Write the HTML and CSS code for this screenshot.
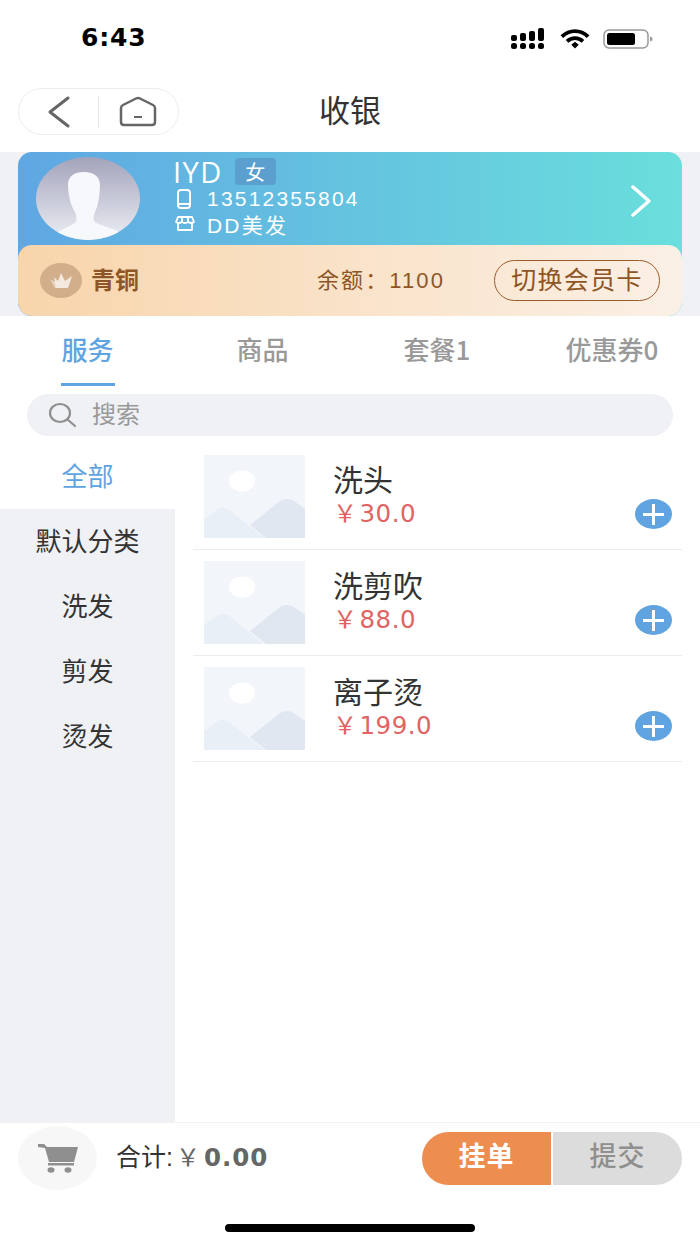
FILE: index.html
```html
<!DOCTYPE html>
<html lang="en">
<head>
    <meta charset="UTF-8">
    <meta name="viewport" content="width=device-width, initial-scale=1.0">
    <title>收银</title>
    <link rel="stylesheet" href="styles.css">
</head>
<body>
    <div class="page">
        <div class="status-bar">
            <span class="time">6:43</span>
            <div class="status-icons">
                <svg width="36" height="21" viewBox="0 0 36 21" fill="#000">
                    <rect x="0" y="7" width="6" height="6" rx="2"/><rect x="9" y="5" width="6" height="8" rx="2"/><rect x="18" y="3" width="6" height="10" rx="2"/><rect x="27" y="0" width="6" height="13" rx="2"/>
                    <rect x="0" y="15" width="6" height="6" rx="2.5"/><rect x="9" y="15" width="6" height="6" rx="2.5"/><rect x="18" y="15" width="6" height="6" rx="2.5"/><rect x="27" y="15" width="6" height="6" rx="2.5"/>
                </svg>
                <svg width="30" height="20" viewBox="0 0 32 20" fill="none" stroke="#000" stroke-width="4">
                    <path d="M2 7.500C10-.5 22-.5 30 7.500"/><path d="M7.500 12.500C12.500 8 19.500 8 24.500 12.500"/><path d="M12 16L16 12.800L20 16L16 20Z" fill="#000" stroke="none"/>
                </svg>
                <svg width="50" height="20" viewBox="0 0 50 20" fill="none">
                    <rect x="1" y="1" width="44" height="18" rx="5" stroke="#999" stroke-width="1.500"/>
                    <rect x="4" y="4" width="28" height="12" rx="2.500" fill="#000"/>
                    <path d="M47 7.500C49 8 49.500 9 49.500 10C49.500 11 49 12 47 12.500Z" fill="#999"/>
                </svg>
            </div>
        </div>

        <div class="nav-bar">
            <div class="capsule">
                <button class="capsule-btn">
                    <svg width="26" height="34" viewBox="0 0 26 34" fill="none" stroke="#666" stroke-width="3" stroke-linecap="round" stroke-linejoin="round"><path d="M22 3L4 17L22 31"/></svg>
                </button>
                <span class="capsule-line"></span>
                <button class="capsule-btn">
                    <svg width="38" height="31" viewBox="0 0 38 31" fill="none" stroke="#666" stroke-width="2.500" stroke-linejoin="round"><path d="M2 12Q2 10 4 9L17 2.500Q19 1.500 21 2.500L34 9Q36 10 36 12V26Q36 29 33 29H5Q2 29 2 26Z"/><path d="M15 21H23" stroke-width="2"/></svg>
                </button>
            </div>
            <h1 class="nav-title">收银</h1>
        </div>

        <section class="member-wrap">
            <div class="member-card">
                <div class="member-top">
                    <div class="avatar">
                        <svg width="104" height="83" viewBox="0 0 104 83">
                            <defs>
                                <linearGradient id="avatarBg" x1="0" y1="0" x2="0" y2="1"><stop offset="0" stop-color="#a3a3bb"/><stop offset="1" stop-color="#eceef4"/></linearGradient>
                            </defs>
                            <rect width="104" height="83" fill="url(#avatarBg)"/>
                            <path d="M16 83C18 76 26 73 39 66C41 64 41 60 39 55C35 49 32 38 32 28C32 19 38 15 48 15C58 15 64 20 64 28C64 38 62 49 59 55C57 60 57 64 60 66C72 71 84 72 91 83Z" fill="#f6f8fc"/>
                        </svg>
                    </div>
                    <div class="member-info">
                        <div class="member-name"><span>IYD</span><span class="gender">女</span></div>
                        <div class="member-line">
                            <svg class="icon-phone" width="14" height="20" viewBox="0 0 14 20" fill="none" stroke="#fff" stroke-width="2"><rect x="1" y="1" width="12" height="18" rx="3"/><path d="M1 15H13"/></svg>
                            <span>13512355804</span>
                        </div>
                        <div class="member-line shop-line">
                            <svg class="icon-shop" width="20" height="15" viewBox="0 0 20 15" fill="none" stroke="#fff" stroke-width="1.800" stroke-linejoin="round"><path d="M3 1H17L19 6Q16 8 13.500 6Q10 8 6.500 6Q4 8 1 6Z"/><path d="M3 7V14H17V7"/><path d="M7 1V6M13 1V6"/></svg>
                            <span>DD美发</span>
                        </div>
                    </div>
                    <svg class="member-arrow" width="22" height="32" viewBox="0 0 22 32" fill="none" stroke="#fff" stroke-width="3.500" stroke-linecap="round" stroke-linejoin="round"><path d="M3 2L19 16L3 30"/></svg>
                </div>
                <div class="member-bottom">
                    <div class="level-badge">
                        <svg width="24" height="18" viewBox="0 0 24 18"><path d="M1 7L8 11L8 16H6Z" fill="#e8d6c4"/><path d="M5 5L9 9L12 1L16 9L23 4L19 16H7Z" fill="#f3e9de"/></svg>
                    </div>
                    <span class="level-name">青铜</span>
                    <span class="balance">余额：1100</span>
                    <button class="switch-card">切换会员卡</button>
                </div>
            </div>
        </section>

        <nav class="tabs">
            <div class="tab active">服务</div>
            <div class="tab">商品</div>
            <div class="tab">套餐1</div>
            <div class="tab">优惠券0</div>
        </nav>

        <div class="search">
            <svg width="30" height="26" viewBox="0 0 30 26" fill="none" stroke="#8f8f8f" stroke-width="2.200" stroke-linecap="round"><ellipse cx="12" cy="11" rx="10" ry="9"/><path d="M19.500 17.500L27 24"/></svg>
            <span>搜索</span>
        </div>

        <div class="content">
            <aside class="sidebar">
                <div class="cat active">全部</div>
                <div class="cat">默认分类</div>
                <div class="cat">洗发</div>
                <div class="cat">剪发</div>
                <div class="cat">烫发</div>
            </aside>
            <div class="goods">
                <div class="good">
                    <svg class="thumb" viewBox="0 0 101 83"><rect width="101" height="83" fill="#f2f5f9"/><ellipse cx="38" cy="26" rx="13" ry="10.500" fill="#fff"/><path d="M0 64L14 54Q18 51 24 54L60 83H0Z" fill="#e9eff6"/><path d="M46 70L76 46Q83 42 90 46L101 54V83H62Z" fill="#e0e7f1"/></svg>
                    <div class="good-text"><div class="good-name">洗头</div><div class="good-price"><span class="yen">￥</span>30.0</div></div>
                    <button class="add"><svg width="21" height="21" viewBox="0 0 21 21" stroke="#fff" stroke-width="3"><path d="M0 10.500H21M10.500 0V21"/></svg></button>
                </div>
                <div class="good">
                    <svg class="thumb" viewBox="0 0 101 83"><rect width="101" height="83" fill="#f2f5f9"/><ellipse cx="38" cy="26" rx="13" ry="10.500" fill="#fff"/><path d="M0 64L14 54Q18 51 24 54L60 83H0Z" fill="#e9eff6"/><path d="M46 70L76 46Q83 42 90 46L101 54V83H62Z" fill="#e0e7f1"/></svg>
                    <div class="good-text"><div class="good-name">洗剪吹</div><div class="good-price"><span class="yen">￥</span>88.0</div></div>
                    <button class="add"><svg width="21" height="21" viewBox="0 0 21 21" stroke="#fff" stroke-width="3"><path d="M0 10.500H21M10.500 0V21"/></svg></button>
                </div>
                <div class="good">
                    <svg class="thumb" viewBox="0 0 101 83"><rect width="101" height="83" fill="#f2f5f9"/><ellipse cx="38" cy="26" rx="13" ry="10.500" fill="#fff"/><path d="M0 64L14 54Q18 51 24 54L60 83H0Z" fill="#e9eff6"/><path d="M46 70L76 46Q83 42 90 46L101 54V83H62Z" fill="#e0e7f1"/></svg>
                    <div class="good-text"><div class="good-name">离子烫</div><div class="good-price"><span class="yen">￥</span>199.0</div></div>
                    <button class="add"><svg width="21" height="21" viewBox="0 0 21 21" stroke="#fff" stroke-width="3"><path d="M0 10.500H21M10.500 0V21"/></svg></button>
                </div>
            </div>
        </div>

        <footer class="bottom-bar">
            <div class="cart">
                <svg width="42" height="30" viewBox="0 0 42 30" fill="#8f8f8f"><path d="M1 1H7L10 4H41L37 19H12L8 5L1 4Z"/><rect x="11" y="20" width="26" height="2.500"/><ellipse cx="14" cy="27" rx="3.500" ry="2.800"/><ellipse cx="31" cy="27" rx="3.500" ry="2.800"/></svg>
            </div>
            <div class="total">合计:<span class="total-num"><span class="yen">￥</span>0.00</span></div>
            <div class="actions">
                <button class="btn-hold">挂单</button>
                <button class="btn-submit">提交</button>
            </div>
        </footer>

        <div class="home-row"><span class="home-bar"></span></div>
    </div>
</body>
</html>
```

FILE: styles.css
```css
* {
    box-sizing: border-box;
}
body {
    margin: 0;
    background: #fff;
    font-family: "Liberation Sans", "Noto Sans CJK SC", sans-serif;
}
button {
    font-family: inherit;
    border: none;
    padding: 0;
}
.page {
    width: 700px;
    height: 1244px;
    display: flex;
    flex-direction: column;
    overflow: hidden;
}

/* status bar */
.status-bar {
    height: 70px;
    padding: 20px 47px 0 81px;
    display: flex;
    justify-content: space-between;
    align-items: flex-start;
}
.time {
    font-family: "DejaVu Sans", sans-serif;
    font-size: 25px;
    font-weight: bold;
    letter-spacing: 0.8px;
    line-height: 36px;
    color: #000;
}
.status-icons {
    display: flex;
    align-items: center;
    gap: 13px;
    padding-top: 8px;
}

/* nav */
.nav-bar {
    height: 82px;
    padding: 18px 0 0 18px;
    position: relative;
}
.capsule {
    width: 161px;
    height: 47px;
    border: 1px solid #ececec;
    border-radius: 24px;
    display: flex;
    align-items: center;
}
.capsule-btn {
    width: 80px;
    background: none;
    display: flex;
    justify-content: center;
    align-items: center;
}
.capsule-line {
    width: 1px;
    height: 32px;
    background: #e2e2e2;
}
.nav-title {
    position: absolute;
    left: 0;
    right: 0;
    top: 22px;
    margin: 0;
    text-align: center;
    font-size: 31px;
    line-height: 40px;
    font-weight: normal;
    color: #333;
}

/* member card */
.member-wrap {
    height: 164px;
    background: #f0f1f5;
    padding: 0 18px;
}
.member-card {
    height: 164px;
    border-radius: 14px;
    background: linear-gradient(90deg, #5fa7e3, #6adfdc);
    display: flex;
    flex-direction: column;
    overflow: hidden;
}
.member-top {
    height: 93px;
    padding: 5px 30px 0 18px;
    display: flex;
    color: #fff;
}
.avatar {
    width: 104px;
    height: 83px;
    flex-shrink: 0;
    border-radius: 50%;
    overflow: hidden;
}
.member-info {
    margin: -1px 0 0 33px;
    flex: 1;
}
.member-name {
    display: flex;
    align-items: center;
    height: 30px;
    font-size: 29px;
    letter-spacing: 1.5px;
    font-family: "Open Sans", sans-serif;
}
.gender {
    margin-left: 12px;
    width: 41px;
    height: 27px;
    background: #5b9fcf;
    border-radius: 4px;
    font-family: "Noto Sans CJK SC", sans-serif;
    font-size: 20px;
    line-height: 27px;
    letter-spacing: 0;
    text-align: center;
}
.member-line {
    display: flex;
    align-items: center;
    gap: 14px;
    height: 27px;
    margin-top: -1px;
    font-size: 21px;
    letter-spacing: 2.2px;
}
.shop-line {
    margin-top: -2px;
    gap: 12px;
}
.icon-phone {
    margin: 0 2px 0 4px;
}
.icon-shop {
    margin-left: 2px;
}
.member-arrow {
    margin-top: 28px;
}
.member-bottom {
    height: 71px;
    border-radius: 14px;
    background: linear-gradient(90deg, #f8d5ab, #fbf0e6);
    display: flex;
    align-items: center;
    padding: 0 22px;
    color: #8e5526;
}
.level-badge {
    width: 42px;
    height: 35px;
    border-radius: 50%;
    background: #d2ae8a;
    display: flex;
    align-items: center;
    justify-content: center;
}
.level-name {
    margin-left: 9px;
    font-size: 24px;
    font-weight: bold;
    padding-bottom: 5px;
}
.balance {
    margin-left: auto;
    margin-right: 49px;
    font-size: 22px;
    letter-spacing: 2.1px;
    padding-bottom: 5px;
}
.switch-card {
    width: 166px;
    height: 41px;
    border: 1.5px solid #9a5c2c;
    border-radius: 21px;
    background: none;
    color: #8e5526;
    font-size: 25px;
    letter-spacing: 1.3px;
    line-height: 30px;
    padding-bottom: 2px;
}

/* tabs */
.tabs {
    height: 70px;
    display: grid;
    grid-template-columns: 175px 175px 174px 176px;
    font-family: "Noto Sans CJK SC", sans-serif;
    font-size: 26px;
    font-weight: 500;
    color: #999;
}
.tab {
    text-align: center;
    line-height: 66px;
    position: relative;
}
.tab.active {
    color: #5fa3e0;
}
.tab.active::after {
    content: "";
    position: absolute;
    left: 61px;
    bottom: 0;
    width: 54px;
    height: 3px;
    background: #5fa3e0;
}
.search {
    margin: 8px 27px 0;
    height: 42px;
    background: #f0f1f5;
    border-radius: 21px;
    display: flex;
    align-items: center;
    padding-left: 21px;
    gap: 14px;
    color: #999;
    font-size: 24px;
}
.search span {
    height: 42px;
    line-height: 42px;
}

/* list area */
.content {
    height: 678px;
    margin-top: 8px;
    display: flex;
}
.sidebar {
    width: 175px;
    background: #f0f1f5;
}
.cat {
    height: 65px;
    line-height: 67px;
    text-align: center;
    font-size: 26px;
    color: #333;
}
.cat.active {
    background: #fff;
    color: #5fa3e0;
}
.goods {
    flex: 1;
    padding: 0 18px;
}
.good {
    height: 106px;
    padding: 0 11px;
    border-bottom: 1px solid #ececec;
    display: flex;
    position: relative;
}
.thumb {
    width: 101px;
    height: 83px;
    margin-top: 11px;
}
.good-text {
    margin: 20px 0 0 28px;
}
.good-name {
    font-size: 30px;
    line-height: 34px;
    color: #333;
}
.good-price {
    font-family: "DejaVu Sans", sans-serif;
    font-size: 24.5px;
    line-height: 28px;
    letter-spacing: 0.5px;
    color: #e06464;
}
.yen {
    font-family: "Noto Sans CJK SC", sans-serif;
    font-size: 24px;
    margin-right: 2px;
}
.add {
    position: absolute;
    right: 10px;
    top: 55px;
    width: 37px;
    height: 30px;
    border-radius: 50%;
    background: #5fa3e0;
    display: flex;
    align-items: center;
    justify-content: center;
}

/* bottom bar */
.bottom-bar {
    height: 76px;
    border-top: 1px solid #f2f2f2;
    padding: 0 18px 5px;
    display: flex;
    align-items: center;
}
.cart {
    width: 79px;
    height: 64px;
    border-radius: 50%;
    background: #f7f7f7;
    display: flex;
    align-items: center;
    justify-content: center;
}
.total {
    margin-left: 19px;
    font-size: 25px;
    line-height: 30px;
    color: #333;
    padding-bottom: 3px;
}
.total-num {
    font-family: "DejaVu Sans", sans-serif;
    font-size: 24.5px;
    font-weight: bold;
    color: #666;
    letter-spacing: 1px;
    margin-left: 3px;
}
.total-num .yen {
    margin-right: 3px;
    font-weight: normal;
}
.actions {
    margin-left: auto;
    display: flex;
    gap: 2px;
}
.btn-hold,
.btn-submit {
    width: 129px;
    height: 53px;
    font-size: 27px;
    line-height: 34px;
    padding-bottom: 2px;
    letter-spacing: 1px;
}
.btn-hold {
    background: #ee8d50;
    color: #fff;
    font-weight: bold;
    border-radius: 27px 0 0 27px;
}
.btn-submit {
    background: #dcdcdc;
    color: #8f8f8f;
    font-weight: 500;
    border-radius: 0 27px 27px 0;
}
.home-row {
    flex: 1;
    display: flex;
    justify-content: center;
    padding-top: 26px;
}
.home-bar {
    width: 250px;
    height: 8px;
    border-radius: 4px;
    background: #000;
}
```
